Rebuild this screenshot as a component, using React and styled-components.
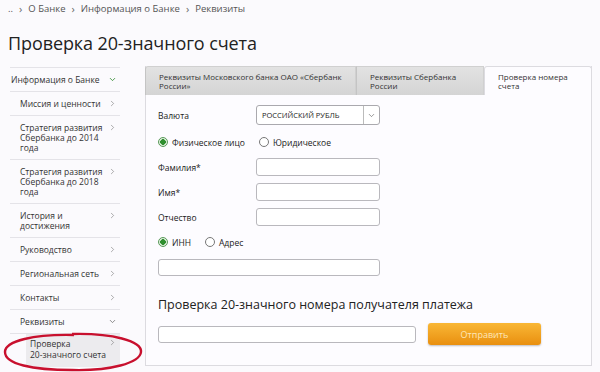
import React from 'react';
import styled, { createGlobalStyle } from 'styled-components';
import { ChevronRight, ChevronDown } from 'lucide-react';

const GlobalStyle = createGlobalStyle`
  html, body {
    margin: 0;
    background: #fbfafd;
  }
  body {
    font-family: "Open Sans", "Liberation Sans", Arial, sans-serif;
    color: #333;
  }
`;

// labels carry their own line breaks so the wrapping matches the source page
const menu = [
  { label: 'Информация о Банке', level: 0, open: true, green: true },
  { label: 'Миссия и ценности', level: 1 },
  { label: 'Стратегия развития\nСбербанка до 2014\nгода', level: 1 },
  { label: 'Стратегия развития\nСбербанка до 2018\nгода', level: 1 },
  { label: 'История и\nдостижения', level: 1 },
  { label: 'Руководство', level: 1 },
  { label: 'Региональная сеть', level: 1 },
  { label: 'Контакты', level: 1 },
  { label: 'Реквизиты', level: 1, open: true },
  { label: 'Проверка\n20-значного счета', level: 2, active: true },
];

const tabs = [
  { label: 'Реквизиты Московского банка ОАО «Сбербанк России»', width: 211 },
  { label: 'Реквизиты Сбербанка России', width: 128 },
  { label: 'Проверка номера счета', width: 108, active: true },
];

const App = () => {
  return (
    <>
      <GlobalStyle />
      <Page>
        <Crumbs>
          <span>..</span>
          <Sep>›</Sep>
          <span>О Банке</span>
          <Sep>›</Sep>
          <span>Информация о Банке</span>
          <Sep>›</Sep>
          <span>Реквизиты</span>
        </Crumbs>
        <Title>Проверка 20-значного счета</Title>
        <Layout>
          <Sidebar>
            {menu.map((item) => (
              <MenuRow key={item.label} $level={item.level} $active={item.active}>
                <MenuText>{item.label}</MenuText>
                <Chevron $green={item.green}>
                  {item.open ? <ChevronDown size={9} strokeWidth={2.2} /> : <ChevronRight size={9} strokeWidth={1.6} />}
                </Chevron>
              </MenuRow>
            ))}
            <Circle viewBox="0 0 142 42" aria-hidden="true">
              <path
                d="M 70 3 C 110 2 140 10 139 21 C 138 32 108 40 70 39 C 30 39 3 33 3 21 C 3 10 32 3 72 4"
                fill="none"
                stroke="#c8102e"
                strokeWidth="2.4"
              />
            </Circle>
          </Sidebar>
          <Panel>
            <Tabs>
              {tabs.map((t) => (
                <Tab key={t.label} $width={t.width} $active={t.active}>
                  {t.label}
                </Tab>
              ))}
            </Tabs>
            <Body>
              <FieldRow $top={0}>
                <Label>Валюта</Label>
                <Select>
                  <SelectValue>РОССИЙСКИЙ РУБЛЬ</SelectValue>
                  <SelectArrow>
                    <ChevronDown size={9} strokeWidth={1.6} />
                  </SelectArrow>
                </Select>
              </FieldRow>
              <RadioRow $top={11}>
                <RadioOption $gap={14}>
                  <Radio $checked />
                  Физическое лицо
                </RadioOption>
                <RadioOption>
                  <Radio />
                  Юридическое
                </RadioOption>
              </RadioRow>
              <FieldRow $top={10}>
                <Label>Фамилия*</Label>
                <Input />
              </FieldRow>
              <FieldRow $top={7}>
                <Label>Имя*</Label>
                <Input />
              </FieldRow>
              <FieldRow $top={7}>
                <Label>Отчество</Label>
                <Input />
              </FieldRow>
              <RadioRow $top={10}>
                <RadioOption $gap={14}>
                  <Radio $checked />
                  ИНН
                </RadioOption>
                <RadioOption>
                  <Radio />
                  Адрес
                </RadioOption>
              </RadioRow>
              <WideInput />
              <Heading>Проверка 20-значного номера получателя платежа</Heading>
              <SendRow>
                <AccountInput />
                <SendButton>Отправить</SendButton>
              </SendRow>
            </Body>
          </Panel>
        </Layout>
      </Page>
    </>
  );
};

const Page = styled.div`
  width: 600px;
  height: 372px;
  overflow: hidden;
  padding: 0 8px;
  box-sizing: border-box;
`;

const Crumbs = styled.div`
  display: flex;
  align-items: center;
  gap: 6px;
  height: 14px;
  margin-top: 1px;
  font-size: 9.5px;
  color: #555;
`;

const Sep = styled.span`
  font-size: 11px;
  color: #666;
`;

const Title = styled.h1`
  margin: 17px 0 0;
  height: 22px;
  line-height: 22px;
  font-weight: 400;
  font-size: 18px;
  color: #222;
  letter-spacing: -0.1px;
`;

const Layout = styled.div`
  display: flex;
  gap: 25px;
  margin-top: 12px;
`;

const Sidebar = styled.div`
  position: relative;
  width: 112px;
  margin-left: 2px;
  margin-top: 1px;
  border-top: 1px solid #e4e3e8;
`;

const MenuRow = styled.div`
  display: flex;
  align-items: flex-start;
  justify-content: space-between;
  padding: ${(p) => (p.$active ? '4px 3px 6px 4px' : `7px 3px 6px ${p.$level === 0 ? 1 : 10}px`)};
  margin-left: ${(p) => (p.$level === 2 ? 16 : 0)}px;
  background: ${(p) => (p.$active ? '#ecebee' : 'transparent')};
  border-bottom: 1px solid ${(p) => (p.$active ? 'transparent' : '#e4e3e8')};
  font-size: 8.5px;
  line-height: ${(p) => (p.$active ? 11 : 10)}px;
  color: #333;
`;

const MenuText = styled.span`
  white-space: pre-line;
`;

const Chevron = styled.span`
  display: flex;
  margin-top: 0;
  color: ${(p) => (p.$green ? '#2e8b2e' : '#777')};
`;

const Circle = styled.svg`
  position: absolute;
  left: -8px;
  bottom: -6px;
  width: 142px;
  height: 42px;
  pointer-events: none;
`;

const Panel = styled.div`
  width: 447px;
  height: 300px;
  display: flex;
  flex-direction: column;
  box-sizing: border-box;
  border: 1px solid #dcdbe0;
  border-top: none;
  background: #fdfcff;
`;

const Tabs = styled.div`
  display: flex;
  height: 29px;
  margin: 0 -1px;
`;

const Tab = styled.div`
  width: ${(p) => p.$width}px;
  box-sizing: border-box;
  padding: 5px 10px 0 13px;
  font-size: 8px;
  line-height: 9px;
  color: #333;
  background: ${(p) => (p.$active ? '#fdfcff' : 'linear-gradient(#e2e2e2, #d4d4d4)')};
  border: 1px solid ${(p) => (p.$active ? '#dcdbe0' : '#d0d0d0')};
  border-bottom: none;
  border-left-color: ${(p) => (p.$active ? '#dcdbe0' : '#c4c4c4')};
  border-radius: ${(p) => (p.$active ? '3px 3px 0 0' : '0')};
  &:first-child {
    border-radius: 3px 0 0 0;
  }
`;

const Body = styled.div`
  padding: 10px 12px 0;
  display: flex;
  flex-direction: column;
`;

const FieldRow = styled.div`
  display: flex;
  align-items: center;
  margin-top: ${(p) => p.$top}px;
`;

const Label = styled.div`
  width: 98px;
  font-size: 8.5px;
  color: #222;
`;

const Input = styled.div`
  width: 124px;
  height: 18px;
  box-sizing: border-box;
  border: 1px solid #b9b8bd;
  border-radius: 3px;
  background: #fff;
`;

const Select = styled.div`
  display: flex;
  width: 124px;
  height: 20px;
  box-sizing: border-box;
  border: 1px solid #aaa9ae;
  border-radius: 3px;
  background: #fff;
`;

const SelectValue = styled.div`
  flex: 1;
  display: flex;
  align-items: center;
  padding-left: 5px;
  font-size: 7.5px;
  color: #222;
  border-right: 1px solid #bbb;
`;

const SelectArrow = styled.div`
  width: 15px;
  display: flex;
  align-items: center;
  justify-content: center;
  color: #555;
`;

const RadioRow = styled.div`
  display: flex;
  align-items: center;
  height: 12px;
  margin-top: ${(p) => p.$top}px;
`;

const RadioOption = styled.div`
  display: flex;
  align-items: center;
  gap: 4px;
  margin-right: ${(p) => p.$gap || 0}px;
  font-size: 8.5px;
  color: #222;
`;

const Radio = styled.span`
  width: 10px;
  height: 10px;
  box-sizing: border-box;
  border-radius: 50%;
  border: 1px solid ${(p) => (p.$checked ? '#5a9a5a' : '#777')};
  background: ${(p) =>
    p.$checked ? 'radial-gradient(circle, #2f8f2f 0 2.6px, #dfeedd 3px)' : '#fff'};
`;

const WideInput = styled(Input)`
  width: 222px;
  height: 17px;
  margin-top: 11px;
`;

const Heading = styled.div`
  margin-top: 20px;
  font-size: 12.5px;
  line-height: 17px;
  color: #222;
`;

const SendRow = styled.div`
  display: flex;
  align-items: center;
  gap: 12px;
  margin-top: 10px;
`;

const AccountInput = styled(Input)`
  width: 258px;
  height: 17px;
`;

const SendButton = styled.div`
  width: 113px;
  height: 22px;
  display: flex;
  align-items: center;
  justify-content: center;
  border-radius: 3px;
  background: linear-gradient(#f9b736, #e98f0f);
  box-shadow: 0 1px 2px rgba(0, 0, 0, 0.25);
  font-size: 9px;
  color: #fde6b8;
`;

export default App;
